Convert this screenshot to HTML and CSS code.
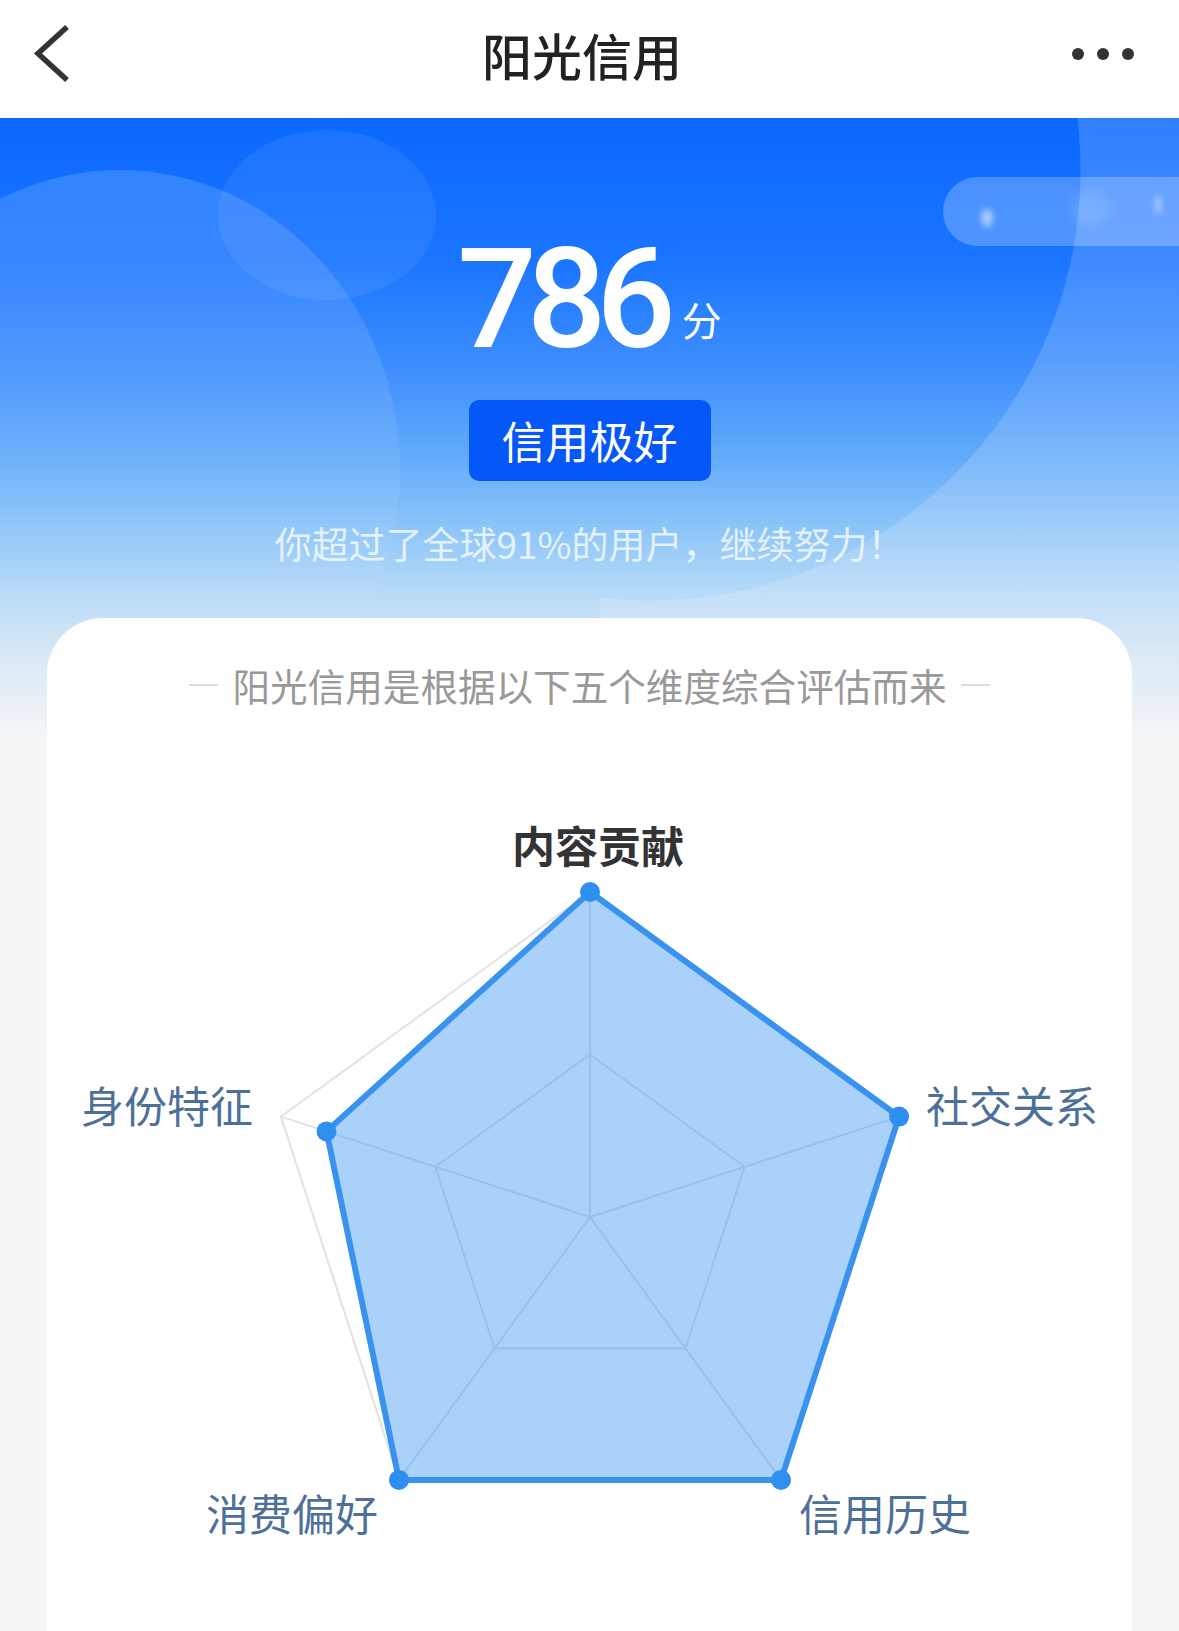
FILE: index.html
```html
<!DOCTYPE html>
<html lang="zh-CN">
<head>
<meta charset="utf-8">
<title>阳光信用</title>
<link rel="stylesheet" href="styles.css">
</head>
<body>
<div class="page">
  <header class="navbar">
    <div class="nav-back" aria-label="返回">
      <svg class="icon-back" width="44" height="60" viewBox="0 0 44 60">
        <path d="M37 3 L8 29.5 L37 56" />
      </svg>
    </div>
    <h1 class="nav-title">阳光信用</h1>
    <div class="nav-more" aria-label="更多"><span></span><span></span><span></span></div>
  </header>

  <section class="hero">
    <div class="hero-deco" aria-hidden="true">
      <span class="deco-left"></span>
      <span class="deco-small"></span>
      <span class="deco-light"></span>
      <span class="hero-pill">
        <span class="blob blob-1"></span>
        <span class="blob blob-2"></span>
        <span class="blob blob-3"></span>
      </span>
    </div>
    <div class="score"><span class="score-num">786</span><span class="score-unit">分</span></div>
    <div class="badge">信用极好</div>
    <p class="rank">你超过了全球91%的用户，继续努力！</p>
  </section>

  <section class="card">
    <h2 class="card-title"><span class="dash"></span><span class="card-title-text">阳光信用是根据以下五个维度综合评估而来</span><span class="dash"></span></h2>
    <div class="radar">
      <svg class="radar-svg" width="1084" height="900" viewBox="0 0 1084 900">
        <g class="grid">
          <polygon points="543,152 852.1,376.6 734,739.9 352,739.9 233.9,376.6" />
          <polygon points="543,314.5 697.6,426.8 638.5,608.5 447.5,608.5 388.4,426.8" />
          <line x1="543" y1="477" x2="543" y2="152" />
          <line x1="543" y1="477" x2="852.1" y2="376.6" />
          <line x1="543" y1="477" x2="734" y2="739.9" />
          <line x1="543" y1="477" x2="352" y2="739.9" />
          <line x1="543" y1="477" x2="233.9" y2="376.6" />
        </g>
        <polygon class="data-area" points="543,152 852.1,376.6 734,739.9 352,739.9 279.5,391.4" />
        <g class="data-dots">
          <circle cx="543" cy="152" r="10" />
          <circle cx="852.1" cy="376.6" r="10" />
          <circle cx="734" cy="739.9" r="10" />
          <circle cx="352" cy="739.9" r="10" />
          <circle cx="279.5" cy="391.4" r="10" />
        </g>
      </svg>
      <span class="axis-label axis-top">内容贡献</span>
      <span class="axis-label axis-left">身份特征</span>
      <span class="axis-label axis-right">社交关系</span>
      <span class="axis-label axis-bl">消费偏好</span>
      <span class="axis-label axis-br">信用历史</span>
    </div>
  </section>
</div>
</body>
</html>
```

FILE: styles.css
```css
* {
  box-sizing: border-box;
}

html, body {
  margin: 0;
  padding: 0;
}

body {
  background: #f4f5f7;
  font-family: "Noto Sans CJK SC", "Noto Sans", sans-serif;
  color: #333;
  overflow: hidden;
}

.page {
  width: 1179px;
  min-height: 1631px;
  background: #f4f5f7;
}

/* ---------- navbar ---------- */
.navbar {
  height: 118px;
  padding: 0 45px 10px 30px;
  background: #fff;
  display: grid;
  grid-template-columns: 1fr auto 1fr;
  align-items: center;
}

.nav-back {
  justify-self: start;
  display: flex;
}

.icon-back path {
  fill: none;
  stroke: #333;
  stroke-width: 5.5;
  stroke-linejoin: miter;
}

.nav-title {
  margin: 0;
  font-size: 50px;
  line-height: 50px;
  font-weight: 500;
  color: #222;
}

.nav-more {
  justify-self: end;
  display: flex;
  gap: 13px;
}

.nav-more span {
  width: 12px;
  height: 12px;
  border-radius: 50%;
  background: #333;
}

/* ---------- hero ---------- */
.hero {
  position: relative;
  overflow: hidden;
  height: 620px;
  padding-top: 111px;
  display: flex;
  flex-direction: column;
  align-items: center;
  background: linear-gradient(180deg,
    #0a68ff 0px,
    #1a75ff 142px,
    #3b8cfd 242px,
    #64acfa 342px,
    #94c9f8 422px,
    #bbdcf7 482px,
    #dbe9f5 542px,
    #f4f5f7 620px);
}

.hero-deco {
  position: absolute;
  inset: 0;
}

.deco-left {
  position: absolute;
  left: -160px;
  top: 52px;
  width: 560px;
  height: 600px;
  border-radius: 50%;
  background: linear-gradient(180deg, rgba(255, 255, 255, 0.15) 0%, rgba(255, 255, 255, 0.06) 55%, rgba(255, 255, 255, 0) 85%);
}

.deco-small {
  position: absolute;
  left: 218px;
  top: 12px;
  width: 218px;
  height: 170px;
  border-radius: 50%;
  background: rgba(255, 255, 255, 0.07);
}

.deco-light {
  position: absolute;
  left: 600px;
  top: 0;
  right: 0;
  height: 620px;
  background: radial-gradient(circle at 50px 52px, rgba(255, 255, 255, 0) 430px, rgba(255, 255, 255, 0.16) 431px);
  -webkit-mask-image: linear-gradient(180deg, #000 0, #000 480px, transparent 600px);
  mask-image: linear-gradient(180deg, #000 0, #000 480px, transparent 600px);
}

.hero-pill {
  position: absolute;
  left: 943px;
  top: 59px;
  width: 300px;
  height: 69px;
  border-radius: 35px;
  background: rgba(255, 255, 255, 0.24);
}

.blob {
  position: absolute;
  border-radius: 50%;
}

.blob-1 {
  left: 38px;
  top: 32px;
  width: 12px;
  height: 18px;
  background: rgba(255, 255, 255, 0.55);
  filter: blur(3px);
}

.blob-2 {
  left: 128px;
  top: 14px;
  width: 40px;
  height: 36px;
  background: rgba(255, 255, 255, 0.12);
  filter: blur(6px);
}

.blob-3 {
  left: 212px;
  top: 18px;
  width: 6px;
  height: 20px;
  background: rgba(255, 255, 255, 0.45);
  filter: blur(3px);
}

.score,
.badge,
.rank {
  position: relative;
  z-index: 1;
}

.score {
  display: flex;
  align-items: flex-end;
  justify-content: center;
  color: #fff;
}

.score-num {
  font-family: Roboto, "Liberation Sans", sans-serif;
  font-weight: 500;
  font-size: 140px;
  line-height: 140px;
  letter-spacing: -10px;
}

.score-unit {
  font-size: 40px;
  line-height: 40px;
  margin: 0 0 30px 16px;
}

.badge {
  margin-top: 31px;
  height: 81px;
  padding: 0 33px;
  border-radius: 10px;
  background: #0657f7;
  color: #fff;
  font-size: 44px;
  line-height: 81px;
}

.rank {
  margin: 42px 0 0;
  font-size: 37px;
  line-height: 40px;
  color: rgba(255, 255, 255, 0.75);
}

/* ---------- card ---------- */
.card {
  position: relative;
  z-index: 2;
  margin: -120px 47px 0;
  height: 1030px;
  padding-top: 48px;
  background: #fff;
  border-radius: 56px 56px 0 0;
}

.card-title {
  margin: 0;
  display: flex;
  align-items: center;
  justify-content: center;
  gap: 15px;
  font-size: 37.6px;
  line-height: 37.6px;
  font-weight: 400;
  color: #999;
}

.dash {
  width: 29px;
  height: 2px;
  background: #dcdcdc;
}

.radar {
  position: relative;
  margin-top: 36px;
  height: 900px;
}

.radar-svg {
  display: block;
}

.grid polygon,
.grid line {
  fill: none;
  stroke: #e2e2e2;
  stroke-width: 2;
}

.data-area {
  fill: rgba(52, 146, 240, 0.42);
  stroke: #3993ee;
  stroke-width: 6;
  stroke-linejoin: round;
}

.data-dots circle {
  fill: #2f8ff0;
}

.axis-label {
  position: absolute;
  font-size: 43px;
  line-height: 43px;
  color: #4d7099;
  white-space: nowrap;
}

.axis-top {
  left: 465px;
  top: 83px;
  font-weight: 700;
  color: #333;
}

.axis-left {
  left: 34px;
  top: 343px;
}

.axis-right {
  left: 879px;
  top: 343px;
}

.axis-bl {
  left: 159px;
  top: 751px;
}

.axis-br {
  left: 752px;
  top: 751px;
}
```
